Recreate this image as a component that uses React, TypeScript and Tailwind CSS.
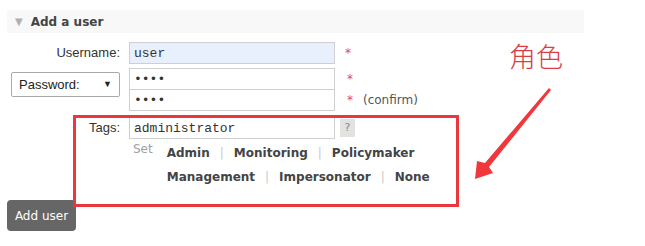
const labelFont = { fontFamily: '"Liberation Sans", Arial, sans-serif' };

const Field = ({ value, type = "text", className = "" }: { value: string; type?: string; className?: string }) => (
  <input
    readOnly
    type={type}
    value={value}
    className={`h-[22px] w-[206px] border border-[#cfcfcf] px-[4px] text-[13px] text-[#333] outline-none font-['Liberation_Mono',monospace] ${className}`}
  />
);

const Star = () => <span className="ml-[10px] text-[12px] leading-none text-[#e8484d]">*</span>;

const Sep = () => <span className="mx-[10px] font-normal text-[#c8c8c8]">|</span>;

const App = () => {
  return (
    <div className="relative h-[246px] w-[645px] overflow-hidden bg-white font-['DejaVu_Sans',Verdana,sans-serif] text-[#333]">
      {/* Section header */}
      <div className="ml-[7px] mt-[10px] flex h-[23px] w-[577px] items-center bg-[#f8f8f8]">
        <span className="ml-[8px] text-[10px] leading-none text-[#b0b0b0]">▼</span>
        <span className="ml-[8px] text-[12px] font-bold text-[#444]">Add a user</span>
      </div>

      {/* Username */}
      <div className="mt-[9px] flex items-center">
        <label style={labelFont} className="w-[120px] text-right text-[13px] text-[#333]">
          Username:
        </label>
        <Field value="user" className="ml-[9px] bg-[#e8f0fe]" />
        <Star />
      </div>

      {/* Password */}
      <div className="mt-[4px] flex">
        <div
          style={labelFont}
          className="ml-[11px] mt-[4px] flex h-[25px] w-[109px] items-center justify-between rounded-[2px] border border-[#a9a9a9] bg-white pl-[7px] pr-[7px] text-[13px] text-[#222]"
        >
          <span>Password:</span>
          <span className="text-[9px]">▼</span>
        </div>
        <div className="ml-[9px] flex flex-col">
          <div className="flex items-center">
            <Field value="1234" type="password" className="bg-white" />
            <span className="ml-[12px] text-[12px] leading-none text-[#e8484d]">*</span>
          </div>
          <div className="-mt-px flex items-center">
            <Field value="1234" type="password" className="bg-white" />
            <span className="ml-[12px] text-[12px] leading-none text-[#e8484d]">*</span>
            <span className="ml-[10px] text-[12px] text-[#555]">(confirm)</span>
          </div>
        </div>
      </div>

      {/* Tags */}
      <div className="mt-[6px] flex items-center">
        <label style={labelFont} className="w-[120px] text-right text-[13px] text-[#333]">
          Tags:
        </label>
        <Field value="administrator" className="ml-[9px] bg-white" />
        <span className="ml-[5px] flex h-[18px] w-[15px] items-center justify-center bg-[#e2e2e2] text-[11px] text-[#888]">
          ?
        </span>
      </div>

      <div className="mt-[2px] flex">
        <span className="ml-[133px] text-[12px] leading-[16px] text-[#a0a0a0]">Set</span>
        <div className="ml-[14px] flex flex-col text-[12px] font-bold text-[#444]">
          <div className="flex h-[24px] items-center">
            <span>Admin</span>
            <Sep />
            <span>Monitoring</span>
            <Sep />
            <span>Policymaker</span>
          </div>
          <div className="flex h-[24px] items-center">
            <span>Management</span>
            <Sep />
            <span>Impersonator</span>
            <Sep />
            <span>None</span>
          </div>
        </div>
      </div>

      <button className="ml-[7px] mt-[11px] h-[31px] w-[69px] rounded-[4px] bg-[#666] text-[12px] text-white">
        Add user
      </button>

      {/* Annotation overlay */}
      <div className="absolute left-[73px] top-[115px] h-[92px] w-[386px] border-[3px] border-[#e8383d]" />
      <div className="absolute left-[509px] top-[36px] text-[27px] font-light leading-[40px] text-[#dc3c44] font-['Noto_Sans_CJK_SC',sans-serif]">
        角色
      </div>
      <svg className="absolute left-0 top-0" width="645" height="246" viewBox="0 0 645 246">
        <polygon
          points="551,90 489,167 493,173 475,179 477,161 485,163 549,88"
          fill="#f0383c"
        />
      </svg>
    </div>
  );
};

export default App;
